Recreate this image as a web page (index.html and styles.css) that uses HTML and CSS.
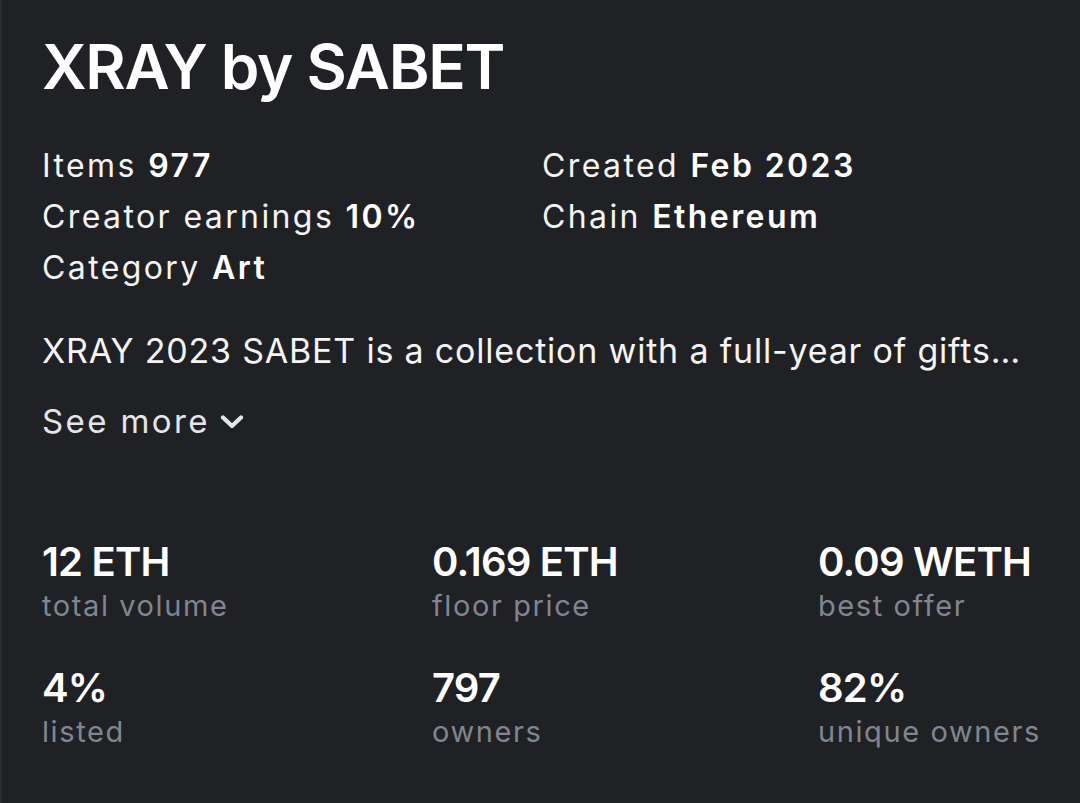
FILE: index.html
```html
<!DOCTYPE html>
<html lang="en">
<head>
<meta charset="utf-8">
<title>XRAY by SABET</title>
<link rel="stylesheet" href="styles.css">
</head>
<body>
<main class="page">
  <h1 class="title">XRAY by SABET</h1>
  <div class="info">
    <div class="info-item">Items <b>977</b></div>
    <div class="info-item">Created <b>Feb 2023</b></div>
    <div class="info-item">Creator earnings <b>10%</b></div>
    <div class="info-item">Chain <b>Ethereum</b></div>
    <div class="info-item">Category <b>Art</b></div>
  </div>
  <p class="desc">XRAY 2023 SABET is a collection with a full-year of gifts…</p>
  <button class="see-more">See more
    <svg class="chev" width="24" height="14" viewBox="0 0 24 14"><polyline points="3,2.5 12,11 21,2.5" fill="none" stroke="currentColor" stroke-width="4.2" stroke-linecap="round" stroke-linejoin="round"/></svg>
  </button>
  <div class="stats">
    <div class="stat"><div class="val">12 ETH</div><div class="lbl">total volume</div></div>
    <div class="stat"><div class="val">0.169 ETH</div><div class="lbl">floor price</div></div>
    <div class="stat"><div class="val">0.09 WETH</div><div class="lbl">best offer</div></div>
    <div class="stat"><div class="val">4%</div><div class="lbl">listed</div></div>
    <div class="stat"><div class="val">797</div><div class="lbl">owners</div></div>
    <div class="stat"><div class="val">82%</div><div class="lbl">unique owners</div></div>
  </div>
</main>
</body>
</html>
```

FILE: styles.css
```css
html, body {
  margin: 0;
  padding: 0;
  background: #202125;
  height: 100%;
}
body {
  font-family: Inter, "Noto Sans", sans-serif;
  color: #ffffff;
  border-left: 2px solid #2a2b30;
  box-sizing: border-box;
}
.page {
  padding: 30px 0 0 40px;
}
.title {
  margin: 0;
  font-size: 62px;
  line-height: 74px;
  font-weight: 600;
  letter-spacing: -1.3px;
}
.info {
  margin-top: 36px;
  display: grid;
  grid-template-columns: 500px 1fr;
}
.info-item {
  font-size: 32px;
  line-height: 51px;
  font-weight: 400;
  color: #f4f4f5;
  letter-spacing: 2.4px;
}
.info-item b {
  font-weight: 600;
  color: #ffffff;
}
.desc {
  margin: 33px 0 0;
  font-size: 34px;
  line-height: 50px;
  color: #f4f4f5;
  white-space: nowrap;
  letter-spacing: 0.8px;
}
.see-more {
  margin: 20px 0 0;
  padding: 0;
  border: 0;
  background: none;
  font-family: inherit;
  font-size: 33px;
  line-height: 50px;
  color: #e3e5e8;
  letter-spacing: 2.4px;
  display: flex;
  align-items: center;
  gap: 10px;
}
.chev {
  display: block;
  margin-top: 2px;
}
.stats {
  margin-top: 92px;
  display: grid;
  grid-template-columns: 390px 386px 1fr;
  row-gap: 38px;
}
.val {
  font-size: 40px;
  line-height: 48px;
  font-weight: 600;
  letter-spacing: -0.8px;
}
.lbl {
  font-size: 29px;
  line-height: 40px;
  color: #80868f;
  letter-spacing: 1.6px;
}
```
